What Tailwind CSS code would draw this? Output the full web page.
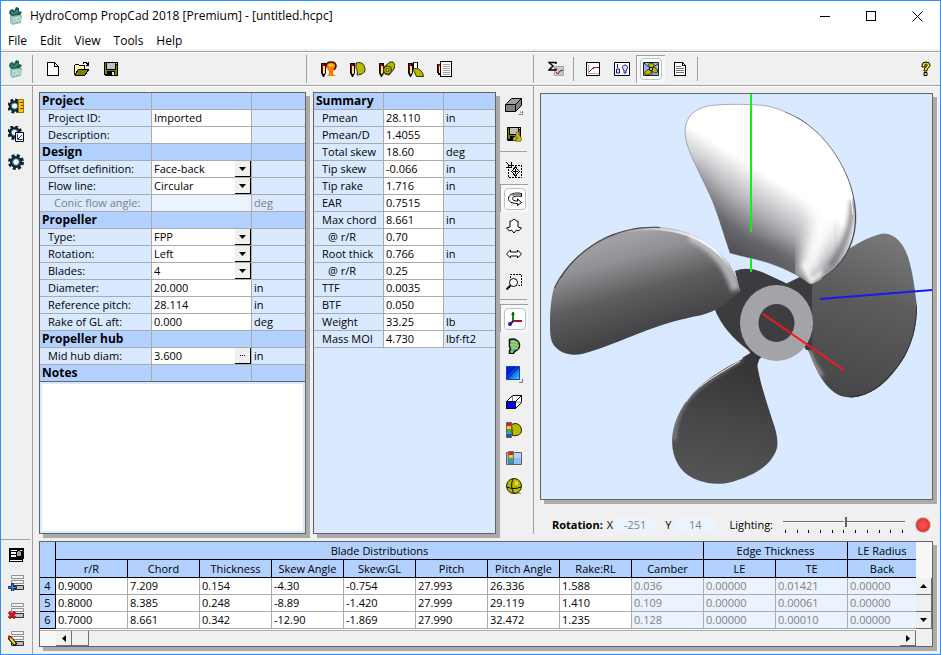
<!DOCTYPE html>
<html lang="en">

<head>
    <meta charset="UTF-8">
    <meta name="viewport" content="width=device-width, initial-scale=1.0">
    <title>HydroComp PropCad 2018 [Premium] - [untitled.hcpc]</title>
    <script src="https://cdn.jsdelivr.net/npm/@tailwindcss/browser@4"></script>
</head>

<body class="flex flex-col min-h-screen bg-[#f0f0f0] border border-[#3390f0] font-['Open_Sans','Noto_Sans',sans-serif] text-[11px] leading-4 text-black">

    <!-- Shared icon parts -->
    <svg class="hidden">
        <symbol id="pencil" viewBox="0 0 6 16">
            <path d="M0 2h5v10l-2 4h-1l-2-4z" fill="#000" />
            <path d="M1 3h2v2h-2z" fill="#c00" />
            <path d="M1 5h1v7h-1z" fill="#800" />
            <path d="M2 5h2v7l-1 1h-1z" fill="#ffe680" />
        </symbol>
        <symbol id="gear" viewBox="0 0 16 16">
            <circle cx="8" cy="8" r="6.500" fill="none" stroke="#10202c" stroke-width="3" stroke-dasharray="2.9 2.205" />
            <circle cx="8" cy="8" r="4.500" fill="#f4f8f8" stroke="#10202c" stroke-width="3" />
            <circle cx="8" cy="8" r="3.500" fill="none" stroke="#2f8090" stroke-width="1" />
        </symbol>
        <symbol id="floppy" viewBox="0 0 16 16">
            <path d="M1 1h14v14h-13l-1-1z" fill="#000" />
            <path d="M2 2h1v11h-1zM13 4h1v10h-1zM3 9h10v1h-10zM3 10h1v3h-1zM12 10h1v4h-1z" fill="#808000" />
            <path d="M4 2h8v6h-8z" fill="#c0c0c0" />
            <path d="M13 2h1v1h-1zM9 11h2v3h-2z" fill="#e8e8e8" />
        </symbol>
        <symbol id="rows" viewBox="0 0 16 16">
            <path d="M3.500 .5h12v3h-12zM3.500 5.500h12v3h-12z" fill="#f4f4f4" stroke="#909090" />
            <path d="M3.500 10.500h12v4h-12z" fill="#c0c0c0" stroke="#303030" />
        </symbol>
        <symbol id="logo" viewBox="0 0 16 18">
            <path d="M2 8l9-1 3 1-1 8-9 2-2-3z" fill="#8fbfae" />
            <path d="M2 3l3-1 1 2 2-4 3 1v3l3 1-2 3-9 1-2-3z" fill="#1d5c4b" />
            <path d="M3 4l3 2 3-3 2 1-3 3-5 0z" fill="#3f8873" />
            <path d="M5 11h3v4h-3zM9 10h3v4h-3z" fill="none" stroke="#d5eae2" />
            <path d="M2 8l2 2v7" fill="none" stroke="#a7cfc0" />
        </symbol>
    </svg>

    <!-- Title bar -->
    <header class="flex items-center h-[30px] bg-white pl-[7px]">
        <svg class="w-4 h-[18px] mr-1.5" aria-hidden="true"><use href="#logo" /></svg>
        <h1 class="flex-1 whitespace-nowrap text-[12px]">HydroComp PropCad 2018 [Premium] - [untitled.hcpc]</h1>
        <div class="flex">
            <button aria-label="Minimize" class="w-[46px] h-[30px] flex items-center justify-center">
                <svg class="w-[11px] h-[11px]" viewBox="0 0 11 11" shape-rendering="crispEdges"><path d="M0 5.500h10" stroke="#000" /></svg>
            </button>
            <button aria-label="Maximize" class="w-[46px] h-[30px] flex items-center justify-center">
                <svg class="w-[11px] h-[11px]" viewBox="0 0 11 11" shape-rendering="crispEdges"><path d="M.5 .5h9v9h-9z" fill="none" stroke="#000" /></svg>
            </button>
            <button aria-label="Close" class="w-[46px] h-[30px] flex items-center justify-center">
                <svg class="w-[11px] h-[11px]" viewBox="0 0 11 11"><path d="M.5 .5l10 10M10.500 .5l-10 10" stroke="#000" /></svg>
            </button>
        </div>
    </header>

    <!-- Menu -->
    <nav class="flex items-center gap-[13px] h-[18px] bg-white pl-[7px] pt-px text-[12px]">
        <a href="#">File</a>
        <a href="#">Edit</a>
        <a href="#">View</a>
        <a href="#">Tools</a>
        <a href="#">Help</a>
    </nav>

    <!-- Toolbar -->
    <div class="mt-0.5 flex items-center h-[35px] border-y border-[#a0a0a0] shadow-[inset_0_1px_0_#fff,0_1px_0_#fff] [&_button]:w-[29px] [&_button]:h-7 [&_button]:flex [&_button]:items-center [&_button]:justify-center">
        <div class="w-[31px]">
            <button aria-label="HydroComp"><svg class="w-4 h-[18px]"><use href="#logo" /></svg></button>
        </div>
        <div class="flex w-[274px] h-7 border-l border-[#a0a0a0] pl-[5px]">
            <button aria-label="New">
                <svg class="w-4 h-4" viewBox="0 0 16 16" shape-rendering="crispEdges"><path d="M2.500 1.500h7l4 4v9h-11z" fill="#fff" stroke="#000" /><path d="M9.500 1.500v4h4" fill="none" stroke="#000" /></svg>
            </button>
            <button aria-label="Open">
                <svg class="w-4 h-4" viewBox="0 0 16 16" shape-rendering="crispEdges"><path d="M.5 13.500v-9l1-1h3l1 1h5v3" fill="#ffffa0" stroke="#000" /><path d="M1 13l4-5h10l-4 6h-10z" fill="#808000" stroke="#000" /><path d="M9 2.500l1-1h2l2 2M14.500 1v3h-3" fill="none" stroke="#000" /></svg>
            </button>
            <button aria-label="Save"><svg class="w-4 h-4" shape-rendering="crispEdges"><use href="#floppy" /></svg></button>
        </div>
        <div class="flex w-[227px] h-7 border-l border-[#a0a0a0] pl-[7px]">
            <button aria-label="Edit material">
                <svg class="w-4 h-4" viewBox="0 0 16 16"><use href="#pencil" width="6" height="16" /><path d="M5 5c0-3 2-4 5-4s5 1 5 4-2 3-3 5v3l3 2h-9l2-2v-3c-1-2-3-2-3-5z" fill="#ff7a00" /><path d="M5 6c0-4 2-5 5-5s5 1 5 4c0 2-1 3-2 4" fill="none" stroke="#401000" stroke-width="1.500" /><path d="M8 3h4l1 2-3 1-3-1z" fill="#ffc030" /></svg>
            </button>
            <button aria-label="Edit blade">
                <svg class="w-4 h-4" viewBox="0 0 16 16"><use href="#pencil" width="6" height="16" /><path d="M6 2c7-2 9 3 9 7 0 3-4 5-8 5 1-3 0-5-1-7z" fill="#b8b800" stroke="#303000" /></svg>
            </button>
            <button aria-label="Edit hub">
                <svg class="w-4 h-4" viewBox="0 0 16 16"><use href="#pencil" width="6" height="16" /><path d="M5 6l6-5h3l2 3-1 4-5 6-4-1z" fill="#b8b800" stroke="#303000" /><circle cx="8.500" cy="9" r="4" fill="#b8b800" stroke="#303000" /><circle cx="8.500" cy="9" r="1.500" fill="#f0f0f0" stroke="#303000" /></svg>
            </button>
            <button aria-label="Edit root">
                <svg class="w-4 h-4" viewBox="0 0 16 16"><use href="#pencil" width="6" height="16" /><path d="M5.500 8v-7l1 1 1-1 1 1 1-1v6" fill="#fff" stroke="#000" /><path d="M5 8c5-2 10 2 10.500 7.500h-7z" fill="#b8b800" stroke="#303000" /></svg>
            </button>
            <button aria-label="Edit table">
                <svg class="w-4 h-4" viewBox="0 0 16 16" shape-rendering="crispEdges"><path d="M3.500 .5h11v15h-11z" fill="#fff" stroke="#000" /><path d="M6 3.500h7M6 5.500h7M6 7.500h7M6 9.500h7M6 11.500h7M6 13.500h7" stroke="#a0a0a0" /><use href="#pencil" width="5" height="15" /></svg>
            </button>
        </div>
        <div class="flex items-center flex-1 h-7 border-l border-[#a0a0a0] pl-[7px]">
            <button aria-label="Calculate">
                <svg class="w-4 h-4" viewBox="0 0 16 16"><path d="M6.500 5.500h9v9h-9z" fill="#c8c8c8" stroke="#a8a8a8" /><path d="M8 3V1.500H1l4 3.500-4 4h7V7.500" fill="none" stroke="#000" stroke-width="1.500" /><path d="M8 11l2 2 2-3 3-1" fill="none" stroke="#a01010" /></svg>
            </button>
            <div class="ml-[3px] mr-1 w-px h-6 bg-[#a0a0a0]"></div>
            <button aria-label="Graph">
                <svg class="w-4 h-4" viewBox="0 0 16 16" shape-rendering="crispEdges"><path d="M1.500 1.500h13v13h-13z" fill="#fff" stroke="#000" /><path d="M3.500 4v8.500h10" fill="none" stroke="#b0b0b0" /><path d="M4 11l3-3 3-2h4" fill="none" stroke="#b01010" /></svg>
            </button>
            <button aria-label="Drawing">
                <svg class="w-4 h-4" viewBox="0 0 16 16"><path d="M.5 1.500h15v13h-15z" fill="#fff" stroke="#000" /><path d="M3.500 3v4M2.500 8h3v4h-3zM11 4a2.500 2.500 0 0 1 2 4l-1 1v3h-2v-3l-1-1a2.500 2.500 0 0 1 2-4z" fill="#dce6ff" stroke="#1010a0" /></svg>
            </button>
            <button aria-label="3D view" aria-pressed="true" class="border-t border-l border-t-[#a0a0a0] border-l-[#a0a0a0] bg-[#f8f8f8]">
                <span class="flex p-0.5 rounded-sm border border-[#b4c4c4] bg-white">
                    <svg class="w-4 h-4" viewBox="0 0 16 16"><path d="M.5 1.500h15v13h-15z" fill="#90bcff" stroke="#202020" /><path d="M8 8C5 6 5 2 8 2s5 3 0 6zM8 8c3-3 6-1 6.500 2s-4 3-6.500-2zM8 8c1 4-1 6-4 6s-4-5 4-6z" fill="#c4b400" stroke="#303000" /><path d="M1 2l7 6M15 3l-5 3M9 10v4" fill="none" stroke="#303000" /><circle cx="8" cy="8" r="1.500" fill="#fff" stroke="#000" /></svg>
                </span>
            </button>
            <button aria-label="Report">
                <svg class="w-4 h-4" viewBox="0 0 16 16" shape-rendering="crispEdges"><path d="M2.500 1.500h8l3 3v10h-11z" fill="#fff" stroke="#000" /><path d="M10.500 1.500v3h3" fill="none" stroke="#000" /><path d="M4 5.500h5M4 7.500h8M4 9.500h8M4 11.500h8" stroke="#707070" /></svg>
            </button>
            <div class="ml-[3px] w-px h-6 bg-[#a0a0a0]"></div>
            <button aria-label="Help" class="ml-auto">
                <svg class="w-4 h-4" viewBox="0 0 16 16"><path d="M4 6V4q0-3 4-3t4 3q0 2-2 3-1 1-1 3H6q0-3 2-4 1-1 1-2 0-1-1-1T7 4v2z" fill="#ffe800" stroke="#000" /><path d="M6 11.500h3v3h-3z" fill="#ffe800" stroke="#000" /></svg>
            </button>
        </div>
    </div>

    <div class="flex flex-1">

        <!-- Left rail -->
        <aside class="flex flex-col w-[31px] pt-1.5 [&_button]:w-[29px] [&_button]:h-7 [&_button]:flex [&_button]:items-center [&_button]:justify-center">
            <button aria-label="Measure settings">
                <svg class="w-4 h-4" viewBox="0 0 16 16"><use href="#gear" x="-1" width="15" height="16" /><path d="M10.500 1.500h5v13h-5z" fill="#ffc21a" stroke="#a07000" /><path d="M12 4.500h3M13 7.500h2M12 10.500h3" stroke="#604000" /></svg>
            </button>
            <button aria-label="Graph settings">
                <svg class="w-4 h-4" viewBox="0 0 16 16"><use href="#gear" x="-1" y="-1" width="15" height="15" /><path d="M7.500 6.500h8v9h-8z" fill="#fff" stroke="#000" /><path d="M9.500 8v5.500h5M10 13l4-4" fill="none" stroke="#3030a0" /></svg>
            </button>
            <button aria-label="Settings"><svg class="w-4 h-4"><use href="#gear" /></svg></button>
            <div class="mt-auto w-[29px] border-t border-[#a0a0a0] py-px">
                <button aria-label="Table view">
                    <svg class="w-4 h-4" viewBox="0 0 16 16" shape-rendering="crispEdges"><path d="M1.500 1.500h13v9h-13z" fill="#fff" stroke="#000" stroke-width="2" /><path d="M2 4.500h6M2 7.500h6" stroke="#000" /><path d="M8.500 8v-3l2-2 3 2v4h-5z" fill="#a0a0a0" stroke="#000" /><path d="M1.500 12.500h13v2h-13z" fill="#fff" stroke="#000" /></svg>
                </button>
                <button aria-label="Add row">
                    <svg class="w-4 h-4" viewBox="0 0 16 16"><use href="#rows" width="16" height="16" /><path d="M3.500 8.500h2v3h3v2h-3v3h-2v-3h-3v-2h3z" fill="#3a8ad8" stroke="#103060" /></svg>
                </button>
                <button aria-label="Delete row">
                    <svg class="w-4 h-4" viewBox="0 0 16 16"><use href="#rows" width="16" height="16" /><path d="M1 9l6 6M7 9l-6 6" stroke="#600" stroke-width="3" /><path d="M1 9l6 6M7 9l-6 6" stroke="#e01020" stroke-width="2" /></svg>
                </button>
                <button aria-label="Edit row">
                    <svg class="w-4 h-4" viewBox="0 0 16 16"><use href="#rows" width="16" height="16" /><path d="M1 6l7 8" stroke="#000" stroke-width="4" /><path d="M2 7l5 6" stroke="#ffe020" stroke-width="2" /><path d="M0 5l2 2" stroke="#d02020" stroke-width="3" /></svg>
                </button>
            </div>
        </aside>

        <main class="flex flex-col flex-1 border-l border-[#a0a0a0] pl-1.5 pb-[7px]">
            <div class="flex flex-1">

                <!-- Project form -->
                <section class="mt-1.5 flex flex-col w-[267px] border border-[#646464] bg-[#d9e9ff] shadow-[4px_4px_0_#ababab]">
                    <table class="w-full table-fixed border-separate border-spacing-0 [&_td]:h-[17px] [&_td]:p-0 [&_td]:border-b [&_td]:border-r [&_td]:border-[#ababab] [&_td:last-child]:border-r-0 [&_td:last-child]:pl-0.5 [&_th]:h-[17px] [&_th]:p-0 [&_th]:border-b [&_th]:border-r [&_th]:border-[#ababab] [&_th]:text-left [&_th]:text-[12px] [&_th]:pl-0.5 [&_label]:block [&_label]:pl-2 [&_label]:whitespace-nowrap [&_input]:block [&_input]:w-full [&_input]:h-4 [&_input]:pl-0.5 [&_input]:bg-white [&_select]:block [&_select]:w-full [&_select]:h-4 [&_select]:pl-0.5 [&_select]:appearance-none [&_select]:bg-white">
                        <colgroup>
                            <col class="w-[112px]">
                            <col class="w-[100px]">
                            <col>
                        </colgroup>
                        <tbody>
                            <tr class="bg-[#b3d1ff]"><th>Project</th><td></td><td></td></tr>
                            <tr><td><label for="projectId">Project ID:</label></td><td><input id="projectId" value="Imported"></td><td></td></tr>
                            <tr><td><label for="description">Description:</label></td><td><input id="description"></td><td></td></tr>
                            <tr class="bg-[#b3d1ff]"><th>Design</th><td></td><td></td></tr>
                            <tr>
                                <td><label for="offset">Offset definition:</label></td>
                                <td><div class="relative"><select id="offset"><option>Face-back</option></select><span class="absolute right-0 top-0 w-4 h-4 flex items-center justify-center bg-[#f0f0f0] border-r border-b border-black pointer-events-none"><svg class="w-[7px] h-1" viewBox="0 0 7 4"><path d="M0 0h7l-3.500 4z" /></svg></span></div></td>
                                <td></td>
                            </tr>
                            <tr>
                                <td><label for="flowLine">Flow line:</label></td>
                                <td><div class="relative"><select id="flowLine"><option>Circular</option></select><span class="absolute right-0 top-0 w-4 h-4 flex items-center justify-center bg-[#f0f0f0] border-r border-b border-black pointer-events-none"><svg class="w-[7px] h-1" viewBox="0 0 7 4"><path d="M0 0h7l-3.500 4z" /></svg></span></div></td>
                                <td></td>
                            </tr>
                            <tr class="text-[#808080]"><td class="pl-1.5!"><label for="conic">Conic flow angle:</label></td><td class="bg-[#ebf3ff]"><input id="conic" class="bg-[#ebf3ff]!" disabled></td><td>deg</td></tr>
                            <tr class="bg-[#b3d1ff]"><th>Propeller</th><td></td><td></td></tr>
                            <tr>
                                <td><label for="type">Type:</label></td>
                                <td><div class="relative"><select id="type"><option>FPP</option></select><span class="absolute right-0 top-0 w-4 h-4 flex items-center justify-center bg-[#f0f0f0] border-r border-b border-black pointer-events-none"><svg class="w-[7px] h-1" viewBox="0 0 7 4"><path d="M0 0h7l-3.500 4z" /></svg></span></div></td>
                                <td></td>
                            </tr>
                            <tr>
                                <td><label for="rotation">Rotation:</label></td>
                                <td><div class="relative"><select id="rotation"><option>Left</option></select><span class="absolute right-0 top-0 w-4 h-4 flex items-center justify-center bg-[#f0f0f0] border-r border-b border-black pointer-events-none"><svg class="w-[7px] h-1" viewBox="0 0 7 4"><path d="M0 0h7l-3.500 4z" /></svg></span></div></td>
                                <td></td>
                            </tr>
                            <tr>
                                <td><label for="blades">Blades:</label></td>
                                <td><div class="relative"><select id="blades"><option>4</option></select><span class="absolute right-0 top-0 w-4 h-4 flex items-center justify-center bg-[#f0f0f0] border-r border-b border-black pointer-events-none"><svg class="w-[7px] h-1" viewBox="0 0 7 4"><path d="M0 0h7l-3.500 4z" /></svg></span></div></td>
                                <td></td>
                            </tr>
                            <tr><td><label for="diameter">Diameter:</label></td><td><input id="diameter" value="20.000"></td><td>in</td></tr>
                            <tr><td><label for="pitch">Reference pitch:</label></td><td><input id="pitch" value="28.114"></td><td>in</td></tr>
                            <tr><td><label for="rake">Rake of GL aft:</label></td><td><input id="rake" value="0.000"></td><td>deg</td></tr>
                            <tr class="bg-[#b3d1ff]"><th>Propeller hub</th><td></td><td></td></tr>
                            <tr>
                                <td><label for="hub">Mid hub diam:</label></td>
                                <td><div class="flex"><input id="hub" class="flex-1 min-w-0" value="3.600"><button aria-label="Hub details" class="w-4 h-4 shrink-0 flex items-center justify-center bg-[#f0f0f0] border-r border-b border-black"><svg class="w-[5px] h-0.5" viewBox="0 0 5 2" shape-rendering="crispEdges"><path d="M0 0h1v1h-1zM2 0h1v1h-1zM4 0h1v1h-1z" /></svg></button></div></td>
                                <td>in</td>
                            </tr>
                            <tr class="bg-[#b3d1ff]"><th><label for="notes" class="pl-0!">Notes</label></th><td></td><td></td></tr>
                        </tbody>
                    </table>
                    <textarea id="notes" class="flex-1 w-full resize-none bg-white border-2 border-[#d9e9ff] shadow-[0_-1px_0_#646464]"></textarea>
                </section>

                <!-- Summary -->
                <section class="mt-1.5 ml-[7px] w-[183px] border border-[#646464] bg-[#d9e9ff] shadow-[4px_4px_0_#ababab]">
                    <table class="w-full table-fixed border-separate border-spacing-0 [&_td]:h-[17px] [&_td]:p-0 [&_td]:pl-0.5 [&_td]:border-b [&_td]:border-r [&_td]:border-[#ababab] [&_td:last-child]:border-r-0 [&_th]:h-[17px] [&_th]:p-0 [&_th]:border-b [&_th]:border-r [&_th]:border-[#ababab] [&_th]:text-left [&_th]:whitespace-nowrap [&_thead_th]:pl-0.5 [&_thead_th]:text-[12px] [&_tbody_th]:pl-2 [&_tbody_th]:font-normal [&_tbody_td:nth-child(2)]:bg-white">
                        <colgroup>
                            <col class="w-[70px]">
                            <col class="w-[60px]">
                            <col>
                        </colgroup>
                        <thead>
                            <tr class="bg-[#b3d1ff]"><th>Summary</th><td></td><td></td></tr>
                        </thead>
                        <tbody>
                            <tr><th>Pmean</th><td>28.110</td><td>in</td></tr>
                            <tr><th>Pmean/D</th><td>1.4055</td><td></td></tr>
                            <tr><th>Total skew</th><td>18.60</td><td>deg</td></tr>
                            <tr><th>Tip skew</th><td>-0.066</td><td>in</td></tr>
                            <tr><th>Tip rake</th><td>1.716</td><td>in</td></tr>
                            <tr><th>EAR</th><td>0.7515</td><td></td></tr>
                            <tr><th>Max chord</th><td>8.661</td><td>in</td></tr>
                            <tr><th class="pl-[14px]!">@ r/R</th><td>0.70</td><td></td></tr>
                            <tr><th>Root thick</th><td>0.766</td><td>in</td></tr>
                            <tr><th class="pl-[14px]!">@ r/R</th><td>0.25</td><td></td></tr>
                            <tr><th>TTF</th><td>0.0035</td><td></td></tr>
                            <tr><th>BTF</th><td>0.050</td><td></td></tr>
                            <tr><th>Weight</th><td>33.25</td><td>lb</td></tr>
                            <tr><th>Mass MOI</th><td>4.730</td><td>lbf·ft2</td></tr>
                        </tbody>
                    </table>
                </section>

                <!-- View tools -->
                <div class="ml-1 w-[33px] pt-1.5 [&_button]:w-7 [&_button]:h-7 [&_button]:flex [&_button]:items-center [&_button]:justify-center">
                    <button aria-label="View direction">
                        <svg class="w-[18px] h-5" viewBox="0 0 18 20"><path d="M.5 8.500l6-6h10v7l-6 6h-10z" fill="#808080" stroke="#000" /><path d="M1 8l6-5h9l-5 5z" fill="#a0a0a0" /><path d="M.5 8.500h10v7M10.500 8.500l6-6" fill="none" stroke="#000" /><path d="M17.500 15v3.500h-4M15 16h1v1" fill="none" stroke="#808080" /></svg>
                    </button>
                    <button aria-label="Save image">
                        <svg class="w-4 h-4" viewBox="0 0 16 16"><use href="#floppy" width="16" height="16" /><path d="M10 6h3v3l3 4-2 3h-3l-1-2-3 1v-3l3-2z" fill="#d0c000" stroke="#404000" stroke-width=".5" /><circle cx="11" cy="12" r="1.500" fill="#6080a0" /></svg>
                    </button>
                    <div class="mt-[3px] mb-1 w-[27px] h-px bg-[#a0a0a0]"></div>
                    <button aria-label="Fit view">
                        <svg class="w-[18px] h-[18px]" viewBox="0 0 18 18" shape-rendering="crispEdges"><path d="M3.500 4.500h13v12h-13z" fill="none" stroke="#000" stroke-dasharray="2 1" /><path d="M10.500 6l4 4.500-4 4.500-4-4.500z" fill="#fff" stroke="#000" /><path d="M10.500 8v5M8 10.500h5M1 1l4 4M6.500 1v5H1" fill="none" stroke="#000" /></svg>
                    </button>
                    <button aria-label="Orbit" aria-pressed="true" class="border-t border-l border-t-[#a0a0a0] border-l-[#a0a0a0] bg-[#f8f8f8]">
                        <span class="flex p-0.5 rounded-sm border border-[#b4c4c4] bg-white">
                            <svg class="w-4 h-4" viewBox="0 0 16 16"><path d="M14.500 2.500v3c-5-1-9 0-9 2s2 2.500 5 2.500V8l4 3.500-4 3v-2c-6 0-9-2-9-5C1.500 3 8 1 14.500 2.500z" fill="#fff" stroke="#000" /><path d="M5 4.500c3-2 6-1 9-1" fill="none" stroke="#888" stroke-width="2" /></svg>
                        </span>
                    </button>
                    <button aria-label="Tilt">
                        <svg class="w-4 h-4" viewBox="0 0 16 16"><path d="M5.500 3l2.500-2 2.500 2h1.500v6l3.500 1-3 3-2-1-2.500 3-2.500-3-2 1-3-3 3.500-1v-6h1.500z" fill="#fff" stroke="#000" /></svg>
                    </button>
                    <button aria-label="Pan">
                        <svg class="w-4 h-4" viewBox="0 0 16 16"><path d="M.5 8l4-4v2h7v-2l4 4-4 4v-2h-7v2z" fill="#fff" stroke="#000" /></svg>
                    </button>
                    <button aria-label="Zoom">
                        <svg class="w-4 h-4" viewBox="0 0 16 16"><path d="M4.500 4v-3.500h11v11h-3" fill="none" stroke="#000" stroke-dasharray="2 1" /><circle cx="7.500" cy="8.500" r="4" fill="#fff" stroke="#000" /><path d="M4.500 11.500l-4 4" stroke="#000" stroke-width="2" /></svg>
                    </button>
                    <div class="mt-[3px] mb-1 w-[27px] h-px bg-[#a0a0a0]"></div>
                    <button aria-label="Show axes" aria-pressed="true" class="border-t border-l border-t-[#a0a0a0] border-l-[#a0a0a0] bg-[#f8f8f8]">
                        <span class="flex p-0.5 rounded-sm border border-[#b4c4c4] bg-white">
                            <svg class="w-4 h-4" viewBox="0 0 16 16"><path d="M6 10V1" stroke="#1a8030" stroke-width="2" /><path d="M4 4l2-3 2 3z" fill="#0c5c20" /><path d="M6 10h9" stroke="#b01030" stroke-width="2" /><path d="M6 10l-3 4" stroke="#101090" stroke-width="2" /><circle cx="3" cy="13" r="2" fill="#2020a0" /></svg>
                        </span>
                    </button>
                    <button aria-label="Contours">
                        <svg class="w-4 h-4" viewBox="0 0 16 16"><path d="M3.500 1.500c6-2 10 2 10 6s-3 5-5 6l-1 2h-4v-3l1-1-1-3z" fill="#40c0c8" stroke="#101000" stroke-width="1.500" /><path d="M5 4q3-1 7 1M4 7q4-1 9 1M5 10q4-1 7 1M5 14h2" fill="none" stroke="#d0c820" stroke-width="1.500" /></svg>
                    </button>
                    <button aria-label="Background">
                        <svg class="w-[18px] h-[18px]" viewBox="0 0 18 18"><defs><linearGradient id="sky" x1="0" y1="0" x2="1" y2="1"><stop offset=".3" stop-color="#0020e0" /><stop offset="1" stop-color="#30e0f0" /></linearGradient></defs><path d="M1.500 1.500h13v13h-13z" fill="url(#sky)" stroke="#1040c0" /><path d="M2 10l8-8M2 14L14 2" stroke="#0010a0" /><path d="M17.500 14v3.500H14" fill="none" stroke="#707090" /></svg>
                    </button>
                    <button aria-label="Box">
                        <svg class="w-4 h-4" viewBox="0 0 16 16"><path d="M.5 7.500l6-6h9v7l-6 6h-9z" fill="#fff" stroke="#000" /><path d="M6.500 1.500v6M6.500 8h9" stroke="#808080" /><path d="M.5 7.500h9v7h-9z" fill="#0000f0" stroke="#000" /><path d="M9.500 7.500l6-6" stroke="#000" /></svg>
                    </button>
                    <button aria-label="Color map">
                        <svg class="w-4 h-4" viewBox="0 0 16 16"><path d="M5.500 2.500c7-3 10 2 10 6s-5 6-9 5z" fill="#b8b800" stroke="#202000" /><path d="M.5 .5h5v15h-5z" fill="#40b040" stroke="#606060" /><path d="M1 1h4v3h-4z" fill="#e02020" /><path d="M1 4h4v3h-4z" fill="#f0d020" /><path d="M1 10h4v2h-4z" fill="#20b0d0" /><path d="M1 12h4v3h-4z" fill="#3040e0" /></svg>
                    </button>
                    <button aria-label="Legend">
                        <svg class="w-4 h-4" viewBox="0 0 16 16"><path d="M.5 2.500h15v12h-15z" fill="#90bcff" stroke="#606060" /><path d="M8 3h7v5h-7z" fill="#b5d3ff" /><path d="M2.500 1.500h5v12h-5z" fill="#40b040" stroke="#707070" /><path d="M3 2h4v3h-4z" fill="#e02020" /><path d="M3 5h4v3h-4z" fill="#f0d020" /><path d="M3 10h4v3h-4z" fill="#20a0e0" /></svg>
                    </button>
                    <button aria-label="Sphere">
                        <svg class="w-4 h-4" viewBox="0 0 16 16"><path d="M6 16h10l-3-2z" fill="#a0a0a0" /><circle cx="8" cy="8" r="7.500" fill="#b8b800" stroke="#202000" /><path d="M1 9c4 2 10 2 14 0M7 1c-2 4-2 10 1 14" fill="none" stroke="#000" /><path d="M9 3l3 1v3h-3z" fill="#e0e040" /></svg>
                    </button>
                </div>

                <!-- 3D view -->
                <section class="flex flex-col flex-1 border-l border-[#a0a0a0] pl-1.5 pr-[7px] pt-[7px]">
                    <div class="flex flex-1 border border-[#646464] bg-[#d9e9ff] shadow-[4px_4px_0_#ababab]">
                        <svg class="w-full" viewBox="541 94 391 405" aria-label="Propeller model">
                            <defs>
                                <linearGradient id="topFill" gradientUnits="userSpaceOnUse" x1="722" y1="244" x2="766" y2="174">
                                    <stop offset="0" stop-color="#525154" />
                                    <stop offset=".25" stop-color="#6c6b6f" />
                                    <stop offset=".6" stop-color="#b8b7bc" />
                                    <stop offset="1" stop-color="#fff" />
                                </linearGradient>
                                <linearGradient id="leftFill" gradientUnits="userSpaceOnUse" x1="632" y1="230" x2="660" y2="328">
                                    <stop offset="0" stop-color="#a4a3a7" />
                                    <stop offset=".25" stop-color="#919094" />
                                    <stop offset=".6" stop-color="#5d5c5e" />
                                    <stop offset="1" stop-color="#434244" />
                                </linearGradient>
                                <linearGradient id="rightFill" gradientUnits="userSpaceOnUse" x1="885" y1="235" x2="830" y2="390">
                                    <stop offset="0" stop-color="#78777a" />
                                    <stop offset=".4" stop-color="#5c5b5d" />
                                    <stop offset="1" stop-color="#474648" />
                                </linearGradient>
                                <linearGradient id="bottomFill" gradientUnits="userSpaceOnUse" x1="745" y1="370" x2="720" y2="480">
                                    <stop offset="0" stop-color="#373637" />
                                    <stop offset=".5" stop-color="#474648" />
                                    <stop offset="1" stop-color="#545355" />
                                </linearGradient>
                                <linearGradient id="edge" gradientUnits="userSpaceOnUse" x1="570" y1="0" x2="740" y2="0">
                                    <stop offset="0" stop-color="#666" />
                                    <stop offset=".5" stop-color="#c8c8cc" />
                                    <stop offset=".85" stop-color="#fff" />
                                    <stop offset="1" stop-color="#909094" />
                                </linearGradient>
                                <filter id="soft" x="-50%" y="-50%" width="200%" height="200%"><feGaussianBlur stdDeviation="7" /></filter>
                                <filter id="fine" x="-50%" y="-50%" width="200%" height="200%"><feGaussianBlur stdDeviation="2" /></filter>
                                <path id="topBlade" d="M730 253L717 213C710 193 703 181 697 168C690 153 685 143 685 130C686 117 694 109 708 106C722 104 742 104 757 105C770 105 785 111 800 119C832 139 856 180 856 217C856 243 844 266 822 279Q814 284 810 284C797 274 782 267 766 262C752 258 741 256 730 253z" />
                                <path id="leftBlade" d="M550 325C550 310 551 298 554 288C563 268 583 248 606 237C624 229 643 226 660 227C697 230 728 251 738 283L740 291Q728 303 715 310C705 315 696 316 688 318C653 325 610 347 582 354C568 357 556 351 552 342C550 337 550 331 550 325z" />
                                <path id="rightBlade" d="M787 283L800 277L852 247Q873 234 885 233.500C898 235 906 247 910 264C914 279 915 292 917 306C917 327 912 345 902 361C888 382 871 397 850 397.500C827 397 816 370 808 350L790 330z" />
                                <path id="bottomBlade" d="M757 361C758 376 765 397 773 422C777 433 779 444 776 451C769 468 751 476 732 482C713 487 694 481 684 472C672 460 670 442 674 427C681 402 699 384 721 371C735 362 746 358 752 353z" />
                                <clipPath id="topClip"><use href="#topBlade" /></clipPath>
                                <clipPath id="leftClip"><use href="#leftBlade" /></clipPath>
                                <clipPath id="rightClip"><use href="#rightBlade" /></clipPath>
                                <clipPath id="bottomClip"><use href="#bottomBlade" /></clipPath>
                            </defs>

                            <use href="#rightBlade" fill="url(#rightFill)" />
                            <g clip-path="url(#rightClip)">
                                <path d="M808 350Q814 366 822 376" fill="none" stroke="#c8c8cc" stroke-width="3" filter="url(#fine)" />
                                <path d="M917 306C917 327 912 345 902 361C888 382 871 397 850 397" fill="none" stroke="#343335" stroke-width="2" />
                            </g>

                            <!-- Hub body -->
                            <path d="M735 271Q747 266 762 272L788 284L800 277L812 280L812 350L806 350L795 330L757 361L748 350Q724 332 715 310L740 291z" fill="#3c3b3d" />
                            <path d="M742 358L757 349L760 357L757 366z" fill="#343335" />

                            <use href="#bottomBlade" fill="url(#bottomFill)" />
                            <g clip-path="url(#bottomClip)">
                                <path d="M674 440Q674 404 706 382T742 360" fill="none" stroke="#e0e0e4" stroke-width="2" opacity=".8" filter="url(#fine)" />
                                <path d="M686 402Q694 388 720 373L740 361" fill="none" stroke="#f0f0f4" />
                            </g>

                            <use href="#topBlade" fill="url(#topFill)" stroke="#66666a" stroke-width=".5" />
                            <g clip-path="url(#topClip)">
                                <path d="M696 165L715 205L732 250" fill="none" stroke="#5c5b5e" stroke-width="6" opacity=".5" filter="url(#soft)" />
                                <path d="M805 170Q835 205 818 240L806 276" fill="none" stroke="#fff" stroke-width="22" filter="url(#soft)" />
                                <path d="M745 246Q772 248 796 264" fill="none" stroke="#59585a" stroke-width="10" opacity=".6" filter="url(#soft)" />
                                <path d="M853 200Q852 238 830 266" fill="none" stroke="#6c6b6e" stroke-width="6" opacity=".7" filter="url(#fine)" />
                                <path d="M804 262L811 282L822 272" fill="none" stroke="#fff" stroke-width="4" filter="url(#fine)" />
                                <path d="M785 111C832 130 856 180 856 217C856 243 844 266 822 279" fill="none" stroke="#3c3b3d" stroke-width="2" />
                                <path d="M815 133Q851 172 853 215" fill="none" stroke="#fff" />
                            </g>

                            <use href="#leftBlade" fill="url(#leftFill)" />
                            <g clip-path="url(#leftClip)">
                                <path d="M690 236Q725 252 736 290" fill="none" stroke="#d8d8dc" stroke-width="10" opacity=".7" filter="url(#fine)" />
                                <path d="M560 278C572 257 588 245 606 238C624 230 643 228 660 229C697 232 728 252 738 284" fill="none" stroke="url(#edge)" stroke-width="3" />
                                <path d="M554 288C563 268 583 248 606 237C624 229 643 226 660 227" fill="none" stroke="#4a494c" stroke-width="2" />
                            </g>

                            <ellipse cx="776.500" cy="323" rx="36.500" ry="38" fill="#a4a3a7" />
                            <ellipse cx="776.500" cy="323" rx="18" ry="19" fill="#3e3d3f" />
                            <path d="M751 94v138M751 258v14" stroke="#14f014" stroke-width="2" />
                            <path d="M820 299l112-9" stroke="#1a1aee" stroke-width="2" />
                            <path d="M763 314l81 56" stroke="#f81818" stroke-width="2" />
                        </svg>
                    </div>

                    <!-- Rotation and lighting -->
                    <div class="mt-[15px] h-[19px] flex items-center pl-3">
                        <b>Rotation:</b>
                        <label for="rotX" class="ml-1">X</label>
                        <input id="rotX" value="-251" disabled class="ml-0.5 w-10 h-4 bg-[#ebf3ff] text-[#808080] text-center">
                        <label for="rotY" class="ml-2.5">Y</label>
                        <input id="rotY" value="14" disabled class="ml-1 w-10 h-4 bg-[#ebf3ff] text-[#808080] text-center">
                        <label for="lighting" class="ml-auto">Lighting:</label>
                        <div class="ml-2.5 w-[122px]">
                            <input id="lighting" type="range" min="0" max="100" value="51" class="block w-full h-3 appearance-none bg-transparent [&::-webkit-slider-runnable-track]:h-0.5 [&::-webkit-slider-runnable-track]:bg-[#707070] [&::-webkit-slider-runnable-track]:border-b [&::-webkit-slider-runnable-track]:border-white [&::-webkit-slider-thumb]:appearance-none [&::-webkit-slider-thumb]:w-[3px] [&::-webkit-slider-thumb]:h-2.5 [&::-webkit-slider-thumb]:-mt-1 [&::-webkit-slider-thumb]:bg-[#f0f0f0] [&::-webkit-slider-thumb]:border-r-2 [&::-webkit-slider-thumb]:border-[#606060]">
                            <div class="mt-0.5 flex justify-between px-0.5 h-[3px] [&>i]:w-px [&>i]:bg-black"><i></i><i></i><i></i><i></i><i></i><i></i><i></i><i></i><i></i><i></i><i></i></div>
                        </div>
                        <button aria-label="Record" class="ml-2.5 mr-0.5 w-4 h-4 rounded-full border border-[#b9cdbb] bg-radial from-[#ff5a5a] to-[#d8101c]"></button>
                    </div>
                </section>
            </div>

            <!-- Blade distributions -->
            <section class="mt-[7px] mr-[7px] border border-[#646464] bg-[#f0f0f0] shadow-[4px_4px_0_#ababab]">
                <div class="flex">
                    <table class="flex-1 table-fixed border-separate border-spacing-0 whitespace-nowrap [&_th]:p-0 [&_th]:font-normal [&_th]:bg-[#b3d1ff] [&_th]:border-r [&_th]:border-b [&_th]:border-black [&_th:last-child]:border-r-0 [&_tbody_th]:border-r! [&_thead_th]:h-[18px] [&_tbody_th]:h-[17px] [&_td]:h-[17px] [&_td]:p-0 [&_td]:pl-0.5 [&_td]:bg-white [&_td]:border-r [&_td]:border-b [&_td]:border-[#ababab] [&_td:nth-child(n+10)]:bg-[#ebf3ff] [&_td:nth-child(n+10)]:text-[#808080] [&_td:last-child]:border-r-0">
                        <colgroup>
                            <col class="w-4">
                            <col span="11" class="w-[72px]">
                            <col>
                        </colgroup>
                        <thead>
                            <tr><th rowspan="2"></th><th colspan="9">Blade Distributions</th><th colspan="2">Edge Thickness</th><th>LE Radius</th></tr>
                            <tr><th>r/R</th><th>Chord</th><th>Thickness</th><th>Skew Angle</th><th>Skew:GL</th><th>Pitch</th><th>Pitch Angle</th><th>Rake:RL</th><th>Camber</th><th>LE</th><th>TE</th><th>Back</th></tr>
                        </thead>
                        <tbody>
                            <tr><th>4</th><td>0.9000</td><td>7.209</td><td>0.154</td><td>-4.30</td><td>-0.754</td><td>27.993</td><td>26.336</td><td>1.588</td><td>0.036</td><td>0.00000</td><td>0.01421</td><td>0.00000</td></tr>
                            <tr><th>5</th><td>0.8000</td><td>8.385</td><td>0.248</td><td>-8.89</td><td>-1.420</td><td>27.999</td><td>29.119</td><td>1.410</td><td>0.109</td><td>0.00000</td><td>0.00061</td><td>0.00000</td></tr>
                            <tr><th>6</th><td>0.7000</td><td>8.661</td><td>0.342</td><td>-12.90</td><td>-1.869</td><td>27.990</td><td>32.472</td><td>1.235</td><td>0.128</td><td>0.00000</td><td>0.00010</td><td>0.00000</td></tr>
                        </tbody>
                    </table>
                    <div class="w-4 flex flex-col pt-9 bg-[#f8f8f8]">
                        <button aria-label="Scroll up" class="h-[17px] flex items-center justify-center bg-[#f0f0f0] border-r border-b border-[#707070]"><svg class="w-[7px] h-1" viewBox="0 0 7 4"><path d="M0 4h7l-3.500-4z" /></svg></button>
                        <div class="flex-1 bg-[#f0f0f0] border-r border-b border-[#707070]"></div>
                        <button aria-label="Scroll down" class="h-[17px] flex items-center justify-center bg-[#f0f0f0] border-r border-b border-[#707070]"><svg class="w-[7px] h-1" viewBox="0 0 7 4"><path d="M0 0h7l-3.500 4z" /></svg></button>
                    </div>
                </div>
                <div class="h-0.5 border-b border-[#ababab] mr-4 bg-white"></div>
                <div class="h-[15px] flex pr-4">
                    <div class="w-4 bg-[#f8f8f8]"></div>
                    <button aria-label="Scroll left" class="w-4 flex items-center justify-center border-r border-b border-[#707070]"><svg class="w-1 h-[7px]" viewBox="0 0 4 7"><path d="M4 0v7l-4-3.500z" /></svg></button>
                    <div class="w-[17px] border-r border-b border-[#707070]"></div>
                    <button aria-label="Scroll right" class="ml-auto w-4 flex items-center justify-center border-r border-b border-[#707070]"><svg class="w-1 h-[7px]" viewBox="0 0 4 7"><path d="M0 0v7l4-3.500z" /></svg></button>
                </div>
            </section>
        </main>
    </div>

</body>

</html>
